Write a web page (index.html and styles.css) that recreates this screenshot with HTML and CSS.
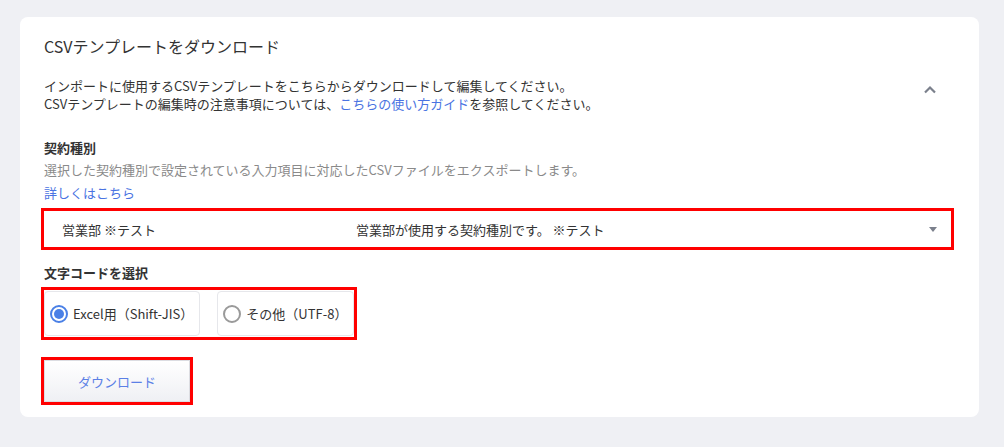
FILE: index.html
```html
<!DOCTYPE html>
<html lang="ja">
  <head>
    <meta charset="UTF-8" />
    <meta name="viewport" content="width=device-width, initial-scale=1.0" />
    <title>CSVテンプレートをダウンロード</title>
    <link rel="stylesheet" href="styles.css">
  </head>
  <body>
    <div class="card">
      <h2 class="card-title">CSVテンプレートをダウンロード</h2>

      <div class="intro">
        <p>
          インポートに使用するCSVテンプレートをこちらからダウンロードして編集してください。<br />
          CSVテンプレートの編集時の注意事項については、<a href="#">こちらの使い方ガイド</a>を参照してください。
        </p>
        <button type="button" class="collapse" aria-label="閉じる">
          <svg width="14" height="9" viewBox="0 0 14 9">
            <path d="M2 7.5 L7 2.5 L12 7.5" fill="none" stroke="#7b808c" stroke-width="2.2" />
          </svg>
        </button>
      </div>

      <div class="field">
        <div class="field-label">契約種別</div>
        <div class="field-help">選択した契約種別で設定されている入力項目に対応したCSVファイルをエクスポートします。</div>
        <a class="field-link" href="#">詳しくはこちら</a>
        <div class="select highlight">
          <span class="select-name">営業部 ※テスト</span>
          <span class="select-desc">営業部が使用する契約種別です。 ※テスト</span>
          <span class="caret"></span>
        </div>
      </div>

      <div class="field">
        <div class="field-label code-label">文字コードを選択</div>
        <div class="radio-group highlight">
          <label class="radio">
            <input type="radio" name="encoding" value="sjis" checked />
            <span>Excel用（Shift-JIS）</span>
          </label>
          <label class="radio">
            <input type="radio" name="encoding" value="utf8" />
            <span>その他（UTF-8）</span>
          </label>
        </div>
      </div>

      <button type="button" class="download highlight">ダウンロード</button>
    </div>
  </body>
</html>
```

FILE: styles.css
```css
body {
  font-family: "Noto Sans CJK JP", "Noto Sans", sans-serif;
  background-color: #eff0f4;
  color: #333;
  margin: 0;
  padding: 17px 25px 30px 20px;
}

.card {
  background-color: #ffffff;
  border-radius: 8px;
  padding: 17px 24px 15px 24px;
}

.card-title {
  font-size: 16px;
  font-weight: normal;
  line-height: 24px;
  margin: 0 0 19px 0;
}

.intro {
  display: flex;
  justify-content: space-between;
  align-items: flex-start;
}

.intro p {
  font-size: 13px;
  line-height: 18px;
  margin: 0;
}

a {
  color: #4a73e2;
  text-decoration: none;
}

.collapse {
  background: none;
  border: none;
  padding: 0;
  margin: 8px 18px 0 0;
  width: 14px;
  height: 9px;
  cursor: pointer;
}

.collapse svg {
  display: block;
}

.field-label {
  font-size: 13px;
  font-weight: bold;
  line-height: 22px;
  margin-top: 24px;
}

.field-help {
  font-size: 13px;
  line-height: 22px;
  color: #8a8a8a;
}

.field-link {
  display: block;
  font-size: 13px;
  line-height: 22px;
  margin-top: 1px;
}

.highlight {
  outline: 3px solid #ff0000;
}

.select {
  position: relative;
  display: grid;
  grid-template-columns: 294px 1fr;
  align-items: center;
  width: 907px;
  height: 36px;
  box-sizing: border-box;
  padding-left: 18px;
  margin-top: 7px;
  font-size: 13px;
  background-color: #fff;
}

.caret {
  position: absolute;
  right: 14px;
  top: 16px;
  width: 0;
  height: 0;
  border-left: 4.5px solid transparent;
  border-right: 4.5px solid transparent;
  border-top: 5px solid #7b808c;
}

.code-label {
  margin-top: 15px;
}

.radio-group {
  display: inline-flex;
  gap: 17px;
  margin-top: 6px;
  padding: 1px 0;
}

.radio {
  display: flex;
  align-items: center;
  gap: 5px;
  height: 45px;
  box-sizing: border-box;
  padding: 0 6px 0 5px;
  border: 1px solid #e6e7eb;
  border-radius: 4px;
  font-size: 13px;
  cursor: pointer;
}

.radio input {
  appearance: none;
  margin: 0;
  width: 18px;
  height: 18px;
  border: 2px solid #9a9a9a;
  border-radius: 50%;
  box-sizing: border-box;
  display: grid;
  place-items: center;
}

.radio input:checked {
  border-color: #4a80e6;
}

.radio input:checked::before {
  content: "";
  width: 10px;
  height: 10px;
  border-radius: 50%;
  background-color: #4a80e6;
}

.download {
  display: block;
  margin-top: 23px;
  width: 146px;
  height: 42px;
  font-family: inherit;
  font-size: 13px;
  color: #5b80e6;
  background: linear-gradient(#ffffff, #eff0f4);
  border: 1px solid #dcdde2;
  border-radius: 0;
  cursor: pointer;
}
```
